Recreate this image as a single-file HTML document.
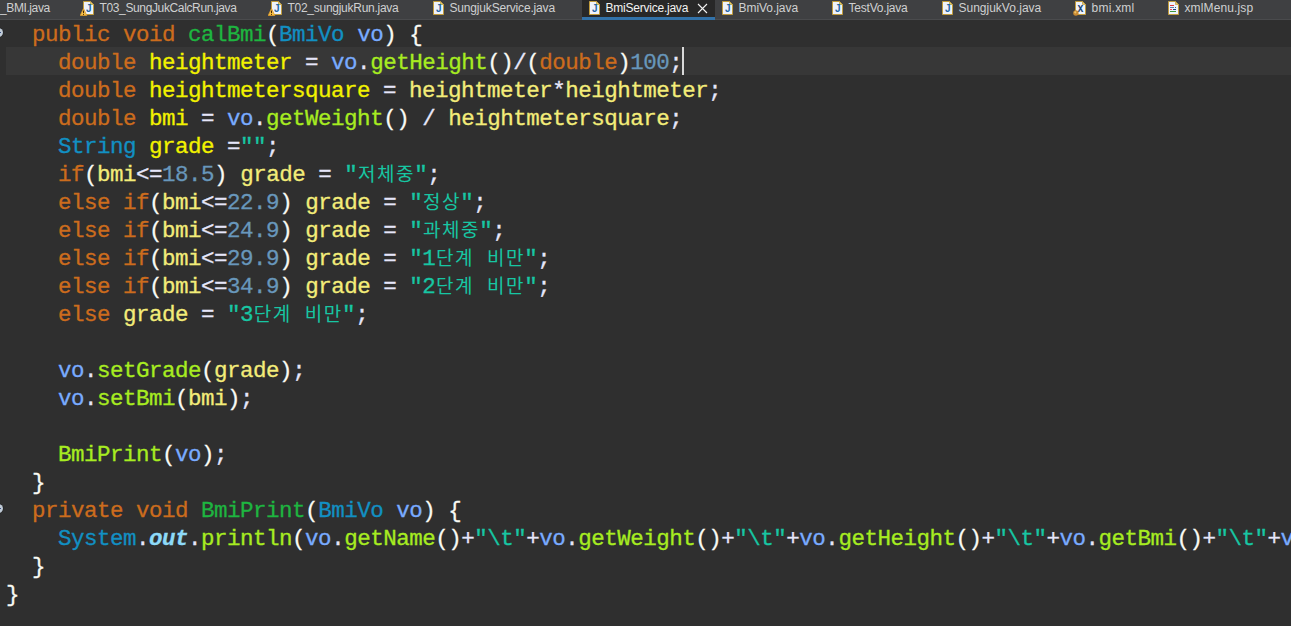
<!DOCTYPE html>
<html lang="ko">
<head>
<meta charset="utf-8">
<title>BmiService.java</title>
<style>
html,body{margin:0;padding:0;}
body{width:1291px;height:626px;overflow:hidden;background:#2f2f2f;position:relative;}
#tabs{position:absolute;left:0;top:0;width:1291px;height:19px;background:#3f4042;border-bottom:1px solid #4a4b4d;}
#tabs .act{position:absolute;left:582px;top:0;width:133px;height:17px;background:#282828;border-bottom:3px solid #3272a9;}
#tabs .t{position:absolute;top:0;height:16px;line-height:16px;font-family:"Liberation Sans","NanumGothic",sans-serif;font-size:12px;color:#cfd0d1;white-space:pre;}
#tabs .t.on{color:#f2f2f2;}
#tabs svg{position:absolute;top:1px;}
#code{position:absolute;left:0;top:20px;width:1291px;height:606px;background:#2f2f2f;overflow:hidden;}
#cur{position:absolute;left:6px;top:27px;width:1285px;height:28px;background:#373737;}
.ln{position:absolute;left:6px;height:28px;line-height:28px;white-space:pre;font-family:"Liberation Mono","Noto Sans CJK KR",monospace;font-size:22.5px;color:#e6e6fa;letter-spacing:-0.5px;margin-top:2px;-webkit-text-stroke:0.3px;}
.k{color:#cc6c1d}.md{color:#1eb540}.c{color:#1290c3}.p{color:#79abff}.lv{color:#f2f200}.lr{color:#f3ec79}
.m{color:#a7ec21}.n{color:#6897bb}.s{color:#17c6a3}.o{color:#e6e6fa}.b{color:#f9faf4}.sf{color:#8ddaf8;font-weight:bold;font-style:italic}
.kr{font-family:"Noto Sans CJK KR","NanumGothic",sans-serif;font-size:19px;display:inline-block;width:19px;text-align:center;line-height:1px;height:1px;vertical-align:baseline;letter-spacing:0;-webkit-text-stroke:0;}
.fold{position:absolute;left:-6px;width:9px;height:9px;border-radius:50%;background:#bfcad6;box-shadow:0 0 0 .7px #232323;}
.fold::after{content:"";position:absolute;left:2px;top:4px;width:5px;height:1px;background:#3a4f86;}
#caret{position:absolute;left:682px;top:27px;width:2px;height:28px;background:#d9d9d9;}
</style>
</head>
<body>
<div id="tabs">
<div class="act"></div>
<span class="t" style="left:0px;letter-spacing:-0.4px">_BMI.java</span>
<svg width="12" height="15" viewBox="0 0 12 15" style="left:83px"><path d="M0.5 0.5H7.5L10.5 3.5V13.5H0.5Z" fill="#eef3fb" stroke="#c19c3c"/><path d="M7.5 0.5V3.5H10.5Z" fill="#e3c874" stroke="#c19c3c" stroke-width=".7"/><text x="3.1" y="10.8" font-family="Liberation Sans, sans-serif" font-weight="bold" font-size="10" fill="#1f66a6">J</text></svg>
<svg width="8" height="9" viewBox="0 0 8 9" style="left:80px;top:8px"><path d="M3.5 0.4L6.8 7.5H0.2Z" fill="#f6c048" stroke="#dc9a2c" stroke-width=".8" stroke-linejoin="round"/><path d="M3.5 2.6V5.2M3.5 6V6.9" stroke="#4a2800" stroke-width="1"/></svg>
<span class="t" style="left:99.5px;letter-spacing:-0.365px">T03_SungJukCalcRun.java</span>
<svg width="12" height="15" viewBox="0 0 12 15" style="left:271px"><path d="M0.5 0.5H7.5L10.5 3.5V13.5H0.5Z" fill="#eef3fb" stroke="#c19c3c"/><path d="M7.5 0.5V3.5H10.5Z" fill="#e3c874" stroke="#c19c3c" stroke-width=".7"/><text x="3.1" y="10.8" font-family="Liberation Sans, sans-serif" font-weight="bold" font-size="10" fill="#1f66a6">J</text></svg>
<svg width="8" height="9" viewBox="0 0 8 9" style="left:268px;top:8px"><path d="M3.5 0.4L6.8 7.5H0.2Z" fill="#f6c048" stroke="#dc9a2c" stroke-width=".8" stroke-linejoin="round"/><path d="M3.5 2.6V5.2M3.5 6V6.9" stroke="#4a2800" stroke-width="1"/></svg>
<span class="t" style="left:287.5px;letter-spacing:-0.27px">T02_sungjukRun.java</span>
<svg width="12" height="15" viewBox="0 0 12 15" style="left:433px"><path d="M0.5 0.5H7.5L10.5 3.5V13.5H0.5Z" fill="#eef3fb" stroke="#c19c3c"/><path d="M7.5 0.5V3.5H10.5Z" fill="#e3c874" stroke="#c19c3c" stroke-width=".7"/><text x="3.1" y="10.8" font-family="Liberation Sans, sans-serif" font-weight="bold" font-size="10" fill="#1f66a6">J</text></svg>
<span class="t" style="left:449.5px;letter-spacing:-0.175px">SungjukService.java</span>
<svg width="12" height="15" viewBox="0 0 12 15" style="left:589px"><path d="M0.5 0.5H7.5L10.5 3.5V13.5H0.5Z" fill="#eef3fb" stroke="#c19c3c"/><path d="M7.5 0.5V3.5H10.5Z" fill="#e3c874" stroke="#c19c3c" stroke-width=".7"/><text x="3.1" y="10.8" font-family="Liberation Sans, sans-serif" font-weight="bold" font-size="10" fill="#1f66a6">J</text></svg>
<span class="t on" style="left:605.5px;letter-spacing:-0.23px">BmiService.java</span>
<svg width="12" height="15" viewBox="0 0 12 15" style="left:722px"><path d="M0.5 0.5H7.5L10.5 3.5V13.5H0.5Z" fill="#eef3fb" stroke="#c19c3c"/><path d="M7.5 0.5V3.5H10.5Z" fill="#e3c874" stroke="#c19c3c" stroke-width=".7"/><text x="3.1" y="10.8" font-family="Liberation Sans, sans-serif" font-weight="bold" font-size="10" fill="#1f66a6">J</text></svg>
<span class="t" style="left:738.5px;letter-spacing:-0.05px">BmiVo.java</span>
<svg width="12" height="15" viewBox="0 0 12 15" style="left:832px"><path d="M0.5 0.5H7.5L10.5 3.5V13.5H0.5Z" fill="#eef3fb" stroke="#c19c3c"/><path d="M7.5 0.5V3.5H10.5Z" fill="#e3c874" stroke="#c19c3c" stroke-width=".7"/><text x="3.1" y="10.8" font-family="Liberation Sans, sans-serif" font-weight="bold" font-size="10" fill="#1f66a6">J</text></svg>
<span class="t" style="left:848.5px;letter-spacing:-0.21px">TestVo.java</span>
<svg width="12" height="15" viewBox="0 0 12 15" style="left:942px"><path d="M0.5 0.5H7.5L10.5 3.5V13.5H0.5Z" fill="#eef3fb" stroke="#c19c3c"/><path d="M7.5 0.5V3.5H10.5Z" fill="#e3c874" stroke="#c19c3c" stroke-width=".7"/><text x="3.1" y="10.8" font-family="Liberation Sans, sans-serif" font-weight="bold" font-size="10" fill="#1f66a6">J</text></svg>
<span class="t" style="left:958.5px;letter-spacing:0px">SungjukVo.java</span>
<svg width="14" height="17" viewBox="0 0 14 17" style="left:1073px;top:1px"><path d="M2.5 0.5H9.5L12.5 3.5V13.5H2.5Z" fill="#eef3fb" stroke="#c19c3c"/><path d="M9.5 0.5V3.5H12.5Z" fill="#e3c874" stroke="#c19c3c" stroke-width=".7"/><text x="4.6" y="8.5" transform="scale(1 1.3)" font-family="Liberation Sans, sans-serif" font-weight="bold" font-size="10.5" fill="#1c4676">x</text><circle cx="2.9" cy="12" r="2.7" fill="#c98a32"/><circle cx="2.3" cy="11.3" r="1.1" fill="#ecc46a"/></svg>
<span class="t" style="left:1091.5px;letter-spacing:0.24px">bmi.xml</span>
<svg width="12" height="15" viewBox="0 0 12 15" style="left:1168px"><path d="M0.5 0.5H7.5L10.5 3.5V13.5H0.5Z" fill="#eef3fb" stroke="#c19c3c"/><path d="M7.5 0.5V3.5H10.5Z" fill="#e3c874" stroke="#c19c3c" stroke-width=".7"/><path d="M2 4.5H6" stroke="#e0383c"/><path d="M2 6.5H6" stroke="#5f7fa8"/><path d="M7 6.5H8" stroke="#2e5590"/><path d="M2 8.5H4" stroke="#f04a4a"/><path d="M5 8.5H8" stroke="#1d3f7c"/><path d="M2 10.5H8" stroke="#3f9a3a"/></svg>
<span class="t" style="left:1184.5px;letter-spacing:0.12px">xmlMenu.jsp</span>
<svg width="11" height="11" viewBox="0 0 11 11" style="left:697px;top:3px"><path d="M1 1L10 10M10 1L1 10" stroke="#f4f4f4" stroke-width="1.1" fill="none"/></svg>
</div>
<div id="code">
<div id="cur"></div>
<div class="fold" style="top:8px"></div>
<div class="fold" style="top:484px"></div>
<div class="ln" style="top:-1px">  <span class="k">public</span> <span class="k">void</span> <span class="md">calBmi</span><span class="b">(</span><span class="c">BmiVo</span> <span class="p">vo</span><span class="b">)</span> <span class="b">{</span></div>
<div class="ln" style="top:27px">    <span class="k">double</span> <span class="lv">heightmeter</span> = <span class="p">vo</span>.<span class="m">getHeight</span><span class="b">()</span>/<span class="b">(</span><span class="k">double</span><span class="b">)</span><span class="n">100</span>;</div>
<div class="ln" style="top:55px">    <span class="k">double</span> <span class="lv">heightmetersquare</span> = <span class="lr">heightmeter</span>*<span class="lr">heightmeter</span>;</div>
<div class="ln" style="top:83px">    <span class="k">double</span> <span class="lv">bmi</span> = <span class="p">vo</span>.<span class="m">getWeight</span><span class="b">()</span> / <span class="lr">heightmetersquare</span>;</div>
<div class="ln" style="top:111px">    <span class="c">String</span> <span class="lv">grade</span> =<span class="s">""</span>;</div>
<div class="ln" style="top:139px">    <span class="k">if</span><span class="b">(</span><span class="lr">bmi</span>&lt;=<span class="n">18.5</span><span class="b">)</span> <span class="lr">grade</span> = <span class="s">"<span class="kr">저</span><span class="kr">체</span><span class="kr">중</span>"</span>;</div>
<div class="ln" style="top:167px">    <span class="k">else</span> <span class="k">if</span><span class="b">(</span><span class="lr">bmi</span>&lt;=<span class="n">22.9</span><span class="b">)</span> <span class="lr">grade</span> = <span class="s">"<span class="kr">정</span><span class="kr">상</span>"</span>;</div>
<div class="ln" style="top:195px">    <span class="k">else</span> <span class="k">if</span><span class="b">(</span><span class="lr">bmi</span>&lt;=<span class="n">24.9</span><span class="b">)</span> <span class="lr">grade</span> = <span class="s">"<span class="kr">과</span><span class="kr">체</span><span class="kr">중</span>"</span>;</div>
<div class="ln" style="top:223px">    <span class="k">else</span> <span class="k">if</span><span class="b">(</span><span class="lr">bmi</span>&lt;=<span class="n">29.9</span><span class="b">)</span> <span class="lr">grade</span> = <span class="s">"1<span class="kr">단</span><span class="kr">계</span> <span class="kr">비</span><span class="kr">만</span>"</span>;</div>
<div class="ln" style="top:251px">    <span class="k">else</span> <span class="k">if</span><span class="b">(</span><span class="lr">bmi</span>&lt;=<span class="n">34.9</span><span class="b">)</span> <span class="lr">grade</span> = <span class="s">"2<span class="kr">단</span><span class="kr">계</span> <span class="kr">비</span><span class="kr">만</span>"</span>;</div>
<div class="ln" style="top:279px">    <span class="k">else</span> <span class="lr">grade</span> = <span class="s">"3<span class="kr">단</span><span class="kr">계</span> <span class="kr">비</span><span class="kr">만</span>"</span>;</div>
<div class="ln" style="top:335px">    <span class="p">vo</span>.<span class="m">setGrade</span><span class="b">(</span><span class="lr">grade</span><span class="b">)</span>;</div>
<div class="ln" style="top:363px">    <span class="p">vo</span>.<span class="m">setBmi</span><span class="b">(</span><span class="lr">bmi</span><span class="b">)</span>;</div>
<div class="ln" style="top:419px">    <span class="m">BmiPrint</span><span class="b">(</span><span class="p">vo</span><span class="b">)</span>;</div>
<div class="ln" style="top:447px">  <span class="b">}</span></div>
<div class="ln" style="top:475px">  <span class="k">private</span> <span class="k">void</span> <span class="md">BmiPrint</span><span class="b">(</span><span class="c">BmiVo</span> <span class="p">vo</span><span class="b">)</span> <span class="b">{</span></div>
<div class="ln" style="top:503px">    <span class="c">System</span>.<span class="sf">out</span>.<span class="m">println</span><span class="b">(</span><span class="p">vo</span>.<span class="m">getName</span><span class="b">()</span>+<span class="s">"\t"</span>+<span class="p">vo</span>.<span class="m">getWeight</span><span class="b">()</span>+<span class="s">"\t"</span>+<span class="p">vo</span>.<span class="m">getHeight</span><span class="b">()</span>+<span class="s">"\t"</span>+<span class="p">vo</span>.<span class="m">getBmi</span><span class="b">()</span>+<span class="s">"\t"</span>+<span class="p">vo</span>.<span class="m">getGrade</span><span class="b">()</span>);</div>
<div class="ln" style="top:531px">  <span class="b">}</span></div>
<div class="ln" style="top:559px"><span class="b">}</span></div>
<div id="caret"></div>
</div>
</body>
</html>
